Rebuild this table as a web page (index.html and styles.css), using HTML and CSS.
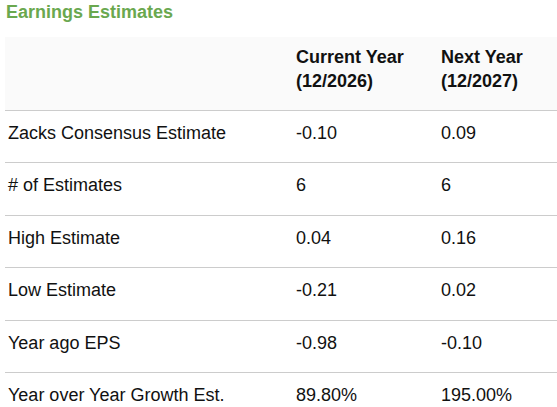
FILE: index.html
```html
<!DOCTYPE html>
<html>
<head>
<meta charset="utf-8">
<link rel="stylesheet" href="styles.css">
</head>
<body>
<h2 class="title">Earnings Estimates</h2>
<table class="est">
  <colgroup>
    <col class="c1"><col class="c2"><col class="c3">
  </colgroup>
  <thead>
    <tr><th></th><th>Current Year<br>(12/2026)</th><th>Next Year<br>(12/2027)</th></tr>
  </thead>
  <tbody>
    <tr><td>Zacks Consensus Estimate</td><td>-0.10</td><td>0.09</td></tr>
    <tr><td># of Estimates</td><td>6</td><td>6</td></tr>
    <tr><td>High Estimate</td><td>0.04</td><td>0.16</td></tr>
    <tr><td>Low Estimate</td><td>-0.21</td><td>0.02</td></tr>
    <tr><td>Year ago EPS</td><td>-0.98</td><td>-0.10</td></tr>
    <tr><td>Year over Year Growth Est.</td><td>89.80%</td><td>195.00%</td></tr>
  </tbody>
</table>
</body>
</html>
```
FILE: styles.css
```css
html, body { margin: 0; padding: 0; background: #fff; }
body { padding: 0 0 0 5px; font-family: "Liberation Sans", Arial, sans-serif; color: #111; overflow: hidden; }
.title { margin: 0; padding: 3px 0 0 1px; height: 37px; box-sizing: border-box; font-size: 18px; line-height: 18px; font-weight: bold; color: #6aa84f; }
.est { border-collapse: collapse; width: 552px; table-layout: fixed; font-size: 18px; }
.c1 { width: 288px; }
.c2 { width: 145px; }
.c3 { width: 119px; }
.est th { background: #fafafa; text-align: left; font-weight: bold; line-height: 24px; padding: 8px 3px 17px 3px; border-bottom: 1px solid #cccccc; vertical-align: top; }
.est td { text-align: left; line-height: 23.4px; padding: 11px 3px 17px 3px; border-bottom: 1px solid #cccccc; }
```
